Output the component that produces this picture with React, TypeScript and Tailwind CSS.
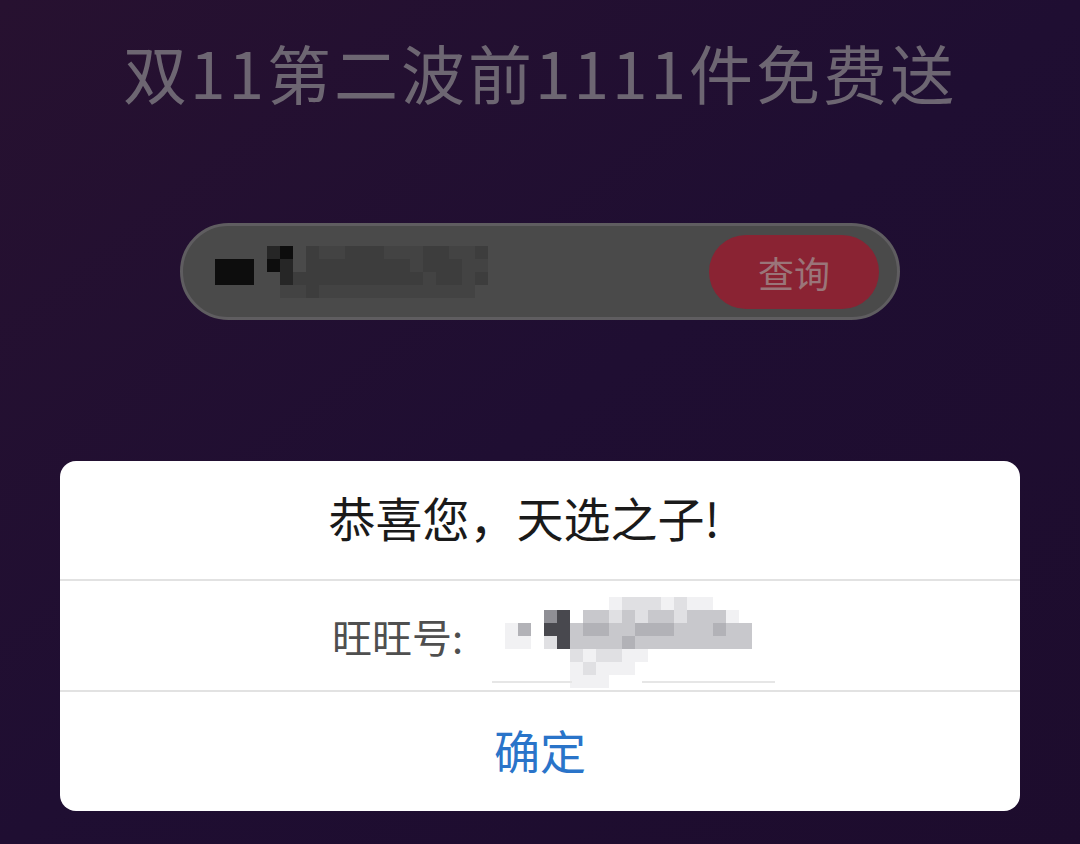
import React from 'react'

const cjk = { fontFamily: '"Noto Sans CJK SC", "Noto Sans", sans-serif' }

const palette: Record<string, string> = {
  '.': 'transparent',
  k: '#0d0d0d',
  d: '#262626',
  g: '#3d3d3d',
  h: '#434343',
  w: '#ffffff',
  l: '#f1f1f3',
  m: '#e0e0e3',
  n: '#c8c8cc',
  o: '#b2b2b7',
  p: '#8f8f95',
  q: '#48484e'
}

// pixelated mosaic that hides the account name
function Mosaic ({ rows, size }: { rows: string[]; size: number }) {
  return (
    <div className="flex flex-col">
      {rows.map((row, i) => (
        <div key={i} className="flex">
          {row.split('').map((c, j) => (
            <div key={j} style={{ width: size, height: size, background: palette[c] }} />
          ))}
        </div>
      ))}
    </div>
  )
}

const inputRows = [
  '....dk.ghhggghhhgghhg',
  'kkk.kd.gggggggghggghh',
  'kkk..dgggggggggghgghg',
  '.....hhghhhhhhhhhhhh.'
]

const nameRows = [
  '.........lmmmlmll...',
  '....pq.nnmnmnnmnnnl.',
  '.lo.qqnoonnooonnnonn',
  '.ll.mqnnnnonnnnnnnnn',
  '......mlmmll........',
  '......lmlll.........',
  '......lll...........'
]

export default function App () {
  return (
    <div
      className="flex h-[844px] w-[1080px] flex-col items-center overflow-hidden bg-gradient-to-br from-[#271130] via-[#1f0e32] to-[#1d0c2d]"
      style={cjk}
    >
      <h1 className="mt-[31px] text-[64px] leading-[80px] tracking-[3px] text-[#6d6672]">
        双11第二波前1111件免费送
      </h1>

      <div className="mt-[112px] flex h-[97px] w-[720px] items-center justify-between rounded-full border-[3px] border-[#5f5d60] bg-[#4a4a4a] pl-[32px] pr-[18px]">
        <Mosaic rows={inputRows} size={13} />
        <button className="flex h-[74px] w-[170px] items-center justify-center rounded-full bg-[#8a2333] text-[36px] text-[#9a7579]">
          查询
        </button>
      </div>

      <div className="mt-[141px] flex w-[960px] flex-col rounded-[16px] bg-white">
        <div className="flex h-[118px] items-center justify-center pb-[6px] pr-[32px] text-[47px] text-[#1a1a1a]">
          恭喜您，天选之子!
        </div>
        <div className="h-[2px] bg-[#e2e2e2]" />
        <div className="flex h-[109px] items-start pl-[272px]">
          <span className="mt-[30px] text-[40px] leading-[50px] text-[#4f4f4f]">旺旺号:</span>
          <div className="ml-[29px] mt-[16px] flex flex-col">
            <Mosaic rows={nameRows} size={13} />
            <div className="-mt-[7px] flex">
              <div className="h-[2px] w-[80px] bg-[#e6e6e6]" />
              <div className="ml-[70px] h-[2px] w-[133px] bg-[#e6e6e6]" />
            </div>
          </div>
        </div>
        <div className="h-[2px] bg-[#e2e2e2]" />
        <div className="flex h-[119px] items-center justify-center pb-[4px] text-[46px] text-[#2a74c9]">
          确定
        </div>
      </div>
    </div>
  )
}
